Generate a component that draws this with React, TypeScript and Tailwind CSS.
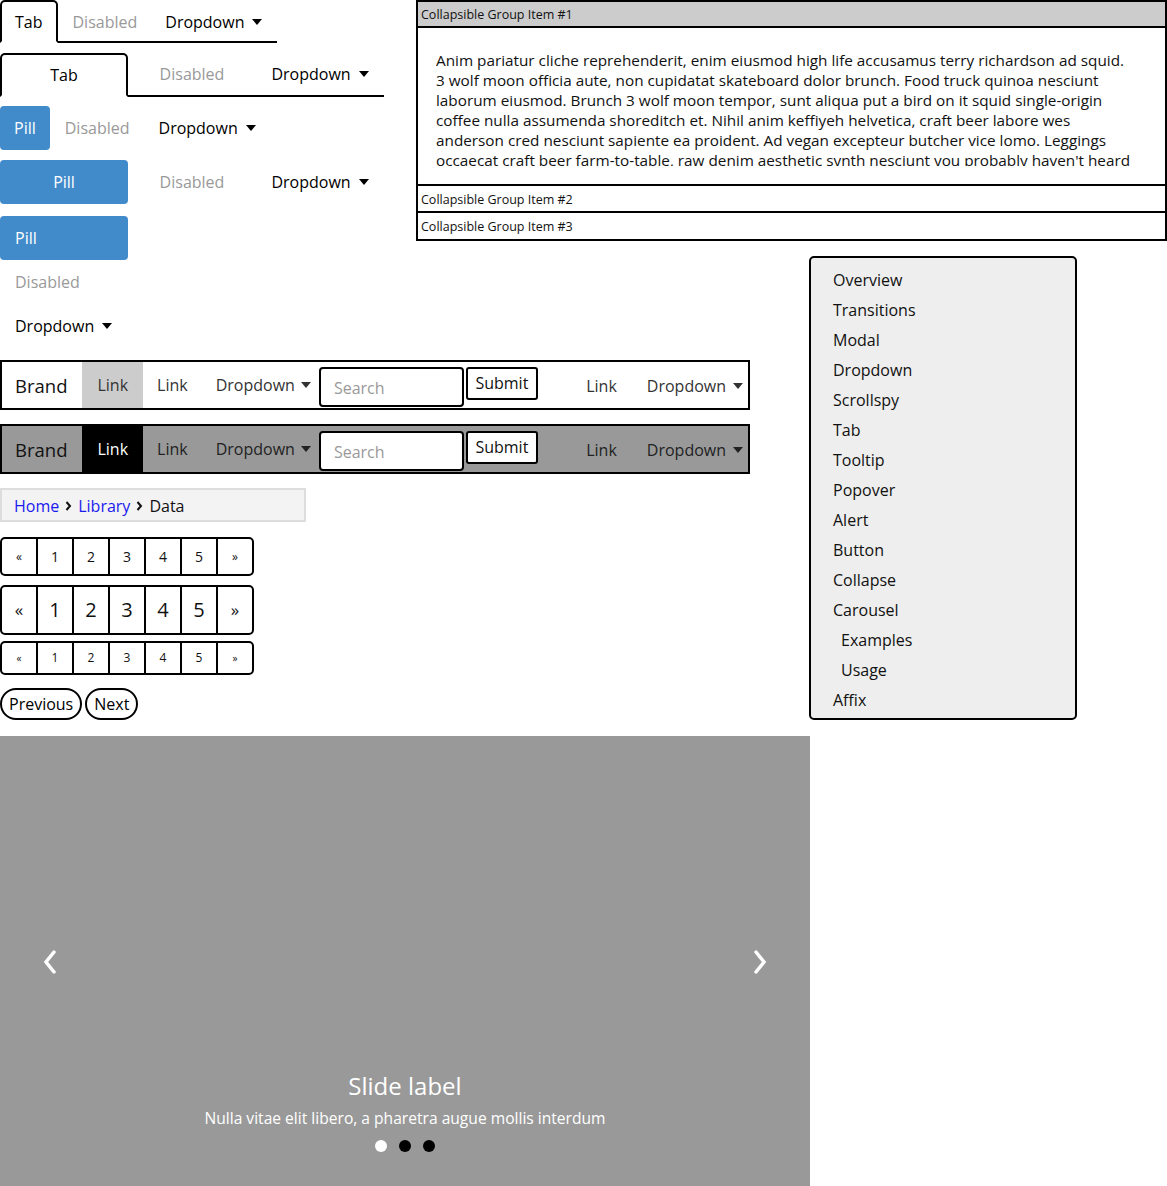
import React from "react";

const Caret = ({ className = "" }: { className?: string }) => (
  <svg width="10" height="6" viewBox="0 0 10 6" className={className}>
    <path d="M0 0 L10 0 L5 6 Z" fill="currentColor" />
  </svg>
);

const Crumb = () => (
  <svg width="7" height="10" viewBox="0 0 7 10" className="mx-[6px]">
    <path d="M1.5 1 L5 5 L1.5 9" stroke="#111" strokeWidth="2" fill="none" />
  </svg>
);

function Navbar({ dark }: { dark?: boolean }) {
  const txt = dark ? "text-[#222]" : "text-[#333]";
  return (
    <div
      className={`flex w-[750px] h-[50px] border-2 border-black ${
        dark ? "bg-[#999999]" : "bg-white"
      }`}
    >
      <div className="flex items-center pl-[13px] pr-[15px] text-[18.5px] text-[#111] pt-[1px]">Brand</div>
      <div
        className={`flex items-center px-[15px] text-[16px] ${
          dark ? "bg-black text-white" : "bg-[#cccccc] text-[#333]"
        }`}
      >
        Link
      </div>
      <div className={`flex items-center px-[14px] text-[16px] ${txt}`}>Link</div>
      <div className={`flex items-center pl-[14px] pr-[8px] text-[16px] ${txt}`}>
        Dropdown
        <Caret className="ml-[6px]" />
      </div>
      <div className="flex items-start pt-[5px]">
        <div className="w-[145px] h-[40px] border-2 border-black rounded-[4px] bg-white flex items-center px-[13px] text-[16px] text-[#999] pt-[1px]">
          Search
        </div>
        <div className="ml-[2px] w-[72px] h-[33px] border-2 border-black rounded-[3px] bg-white flex items-center justify-center text-[16px] text-[#111] pb-[2px]">
          Submit
        </div>
      </div>
      <div className="ml-auto flex pt-[1px]">
        <div className={`flex items-center px-[15px] text-[16px] ${txt}`}>Link</div>
        <div className={`flex items-center pl-[15px] pr-[5px] text-[16px] ${txt}`}>
          Dropdown
          <Caret className="ml-[7px]" />
        </div>
      </div>
    </div>
  );
}

function Pagination({ h, size, arrow }: { h: string; size: string; arrow: string }) {
  const items = ["«", "1", "2", "3", "4", "5", "»"];
  return (
    <div className={`flex w-fit border-2 border-black rounded-[5px] ${h}`}>
      {items.map((it, i) => (
        <div
          key={i}
          className={`flex items-center justify-center text-[#111] ${
            i > 0 ? "w-[36px] border-l-2 border-black" : "w-[34px]"
          } ${i === 0 || i === 6 ? arrow : size}`}
        >
          {it}
        </div>
      ))}
    </div>
  );
}

export default function App() {
  const side = [
    ["Overview", 0],
    ["Transitions", 0],
    ["Modal", 0],
    ["Dropdown", 0],
    ["Scrollspy", 0],
    ["Tab", 0],
    ["Tooltip", 0],
    ["Popover", 0],
    ["Alert", 0],
    ["Button", 0],
    ["Collapse", 0],
    ["Carousel", 0],
    ["Examples", 1],
    ["Usage", 1],
    ["Affix", 0],
  ] as const;

  const lines = [
    "Anim pariatur cliche reprehenderit, enim eiusmod high life accusamus terry richardson ad squid.",
    "3 wolf moon officia aute, non cupidatat skateboard dolor brunch. Food truck quinoa nesciunt",
    "laborum eiusmod. Brunch 3 wolf moon tempor, sunt aliqua put a bird on it squid single-origin",
    "coffee nulla assumenda shoreditch et. Nihil anim keffiyeh helvetica, craft beer labore wes",
    "anderson cred nesciunt sapiente ea proident. Ad vegan excepteur butcher vice lomo. Leggings",
    "occaecat craft beer farm-to-table, raw denim aesthetic synth nesciunt you probably haven't heard",
    "of them accusamus labore sustainable VHS.",
  ];

  return (
    <div className="w-[1167px] bg-white text-black" style={{ fontFamily: "'Open Sans', 'Noto Sans', sans-serif" }}>
      <div className="grid grid-cols-[416px_393px_268px_90px] grid-rows-[256px_104px_376px]">
        {/* Part A */}
        <div className="col-start-1 row-start-1 row-span-2">
          {/* tabs */}
          <div className="flex w-[277px] h-[43px] border-b-2 border-black text-[16px]">
            <div className="h-[43px] -mb-[2px] flex items-center px-[13px] border-2 border-black border-b-transparent rounded-t-[5px] bg-white">
              Tab
            </div>
            <div className="h-[43px] flex items-center pl-[15px] pr-[14px] text-[#999]">Disabled</div>
            <div className="h-[43px] flex items-center px-[14px]">
              Dropdown
              <Caret className="ml-[8px]" />
            </div>
          </div>
          {/* justified tabs */}
          <div className="mt-[10px] grid grid-cols-3 w-[384px] h-[44px] border-b-2 border-black text-[16px]">
            <div className="h-[44px] -mb-[2px] flex items-center justify-center border-2 border-black border-b-transparent rounded-t-[5px] bg-white">
              Tab
            </div>
            <div className="h-[42px] flex items-center justify-center text-[#999]">Disabled</div>
            <div className="h-[42px] flex items-center justify-center">
              Dropdown
              <Caret className="ml-[8px]" />
            </div>
          </div>
          {/* pills */}
          <div className="mt-[9px] flex h-[44px] text-[16px]">
            <div className="flex items-center px-[14px] rounded-[4px] bg-[#428bca] text-white">Pill</div>
            <div className="flex items-center pl-[15px] pr-[14px] text-[#999]">Disabled</div>
            <div className="flex items-center pl-[15px] pr-[14px]">
              Dropdown
              <Caret className="ml-[8px]" />
            </div>
          </div>
          {/* justified pills */}
          <div className="mt-[10px] grid grid-cols-3 w-[384px] h-[44px] text-[16px]">
            <div className="flex items-center justify-center rounded-[4px] bg-[#428bca] text-white">Pill</div>
            <div className="flex items-center justify-center text-[#999]">Disabled</div>
            <div className="flex items-center justify-center">
              Dropdown
              <Caret className="ml-[8px]" />
            </div>
          </div>
          {/* stacked pills */}
          <div className="mt-[12px] w-[128px] flex flex-col text-[16px]">
            <div className="h-[44px] flex items-center px-[15px] rounded-[4px] bg-[#428bca] text-white">Pill</div>
            <div className="h-[44px] flex items-center px-[15px] text-[#999]">Disabled</div>
            <div className="h-[44px] flex items-center px-[15px]">
              Dropdown
              <Caret className="ml-[8px]" />
            </div>
          </div>
        </div>

        {/* Accordion */}
        <div className="col-start-2 col-span-3 row-start-1 self-start border-2 border-black">
          <div className="h-[26px] bg-[#cccccc] border-b-2 border-black flex items-center px-[3px] pt-[3px] text-[12.5px] text-[#111]">
            Collapsible Group Item #1
          </div>
          <div className="border-b-2 border-black pt-[22px] pb-[18px] pl-[18px] pr-[18px]">
            <div className="h-[116px] overflow-hidden text-[15.3px] leading-[20px] text-[#111]">
              {lines.map((l, i) => (
                <div key={i} className="whitespace-nowrap">
                  {l}
                </div>
              ))}
            </div>
          </div>
          <div className="h-[27px] border-b-2 border-black flex items-center px-[3px] pt-[3px] text-[12.5px] text-[#111]">
            Collapsible Group Item #2
          </div>
          <div className="h-[26px] flex items-center px-[3px] pt-[3px] text-[12.5px] text-[#111]">
            Collapsible Group Item #3
          </div>
        </div>

        {/* Side nav */}
        <div className="col-start-3 row-start-2 row-span-2 self-start h-[464px] border-2 border-black rounded-[5px] bg-[#eeeeee] pt-[7px] text-[16px] text-[#111]">
          {side.map(([label, sub]) => (
            <div key={label} className={`h-[30px] flex items-center ${sub ? "pl-[30px]" : "pl-[22px]"}`}>
              {label}
            </div>
          ))}
        </div>

        {/* Part B */}
        <div className="col-start-1 col-span-2 row-start-3">
          <Navbar />
          <div className="mt-[14px]">
            <Navbar dark />
          </div>
          <div className="mt-[14px] w-[306px] h-[34px] border-2 border-[#dddddd] bg-[#f3f3f3] flex items-center px-[12px] text-[16px] pt-[1px]">
            <span className="text-[#1a1aee]">Home</span>
            <Crumb />
            <span className="text-[#1a1aee]">Library</span>
            <Crumb />
            <span className="text-[#111]">Data</span>
          </div>
          <div className="mt-[15px]">
            <Pagination h="h-[39px]" size="text-[14px]" arrow="text-[12px]" />
          </div>
          <div className="mt-[9px]">
            <Pagination h="h-[50px]" size="text-[20px]" arrow="text-[17px]" />
          </div>
          <div className="mt-[6px]">
            <Pagination h="h-[34px]" size="text-[12px]" arrow="text-[10px]" />
          </div>
          <div className="mt-[13px] flex gap-[3px] text-[16px]">
            <div className="h-[32px] flex items-center px-[7px] border-2 border-black rounded-full">Previous</div>
            <div className="h-[32px] flex items-center px-[7px] border-2 border-black rounded-full">Next</div>
          </div>
        </div>
      </div>

      {/* Carousel */}
      <div className="relative w-[810px] h-[450px] bg-[#999999] overflow-hidden">
        <svg className="absolute left-[42px] top-[214px]" width="16" height="24" viewBox="0 0 16 24">
          <path d="M12 2 L4 12 L12 22" stroke="white" strokeWidth="3.5" fill="none" strokeLinecap="round" />
        </svg>
        <svg className="absolute left-[752px] top-[214px]" width="16" height="24" viewBox="0 0 16 24">
          <path d="M4 2 L12 12 L4 22" stroke="white" strokeWidth="3.5" fill="none" strokeLinecap="round" />
        </svg>
        <div className="absolute left-0 right-0 top-[332px] flex flex-col items-center text-white">
          <div className="text-[24px] leading-[36px]">Slide label</div>
          <div className="mt-[4px] text-[15.6px] leading-[20px]">Nulla vitae elit libero, a pharetra augue mollis interdum</div>
          <div className="mt-[12px] flex gap-[12px]">
            <span className="w-[12px] h-[12px] rounded-full bg-white" />
            <span className="w-[12px] h-[12px] rounded-full bg-black" />
            <span className="w-[12px] h-[12px] rounded-full bg-black" />
          </div>
        </div>
      </div>
    </div>
  );
}
